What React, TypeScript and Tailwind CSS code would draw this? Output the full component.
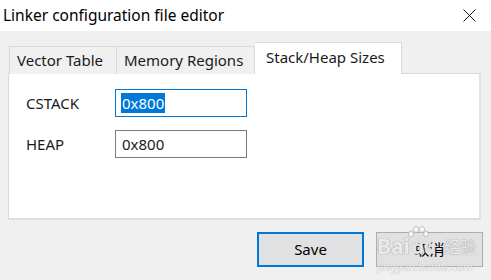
import React from "react";

const font = { fontFamily: '"Noto Sans", "Noto Sans CJK SC", sans-serif' };

export default function App() {
  return (
    <div className="w-[491px] h-[280px] bg-[#f0f0f0] text-[#1a1a1a] overflow-hidden relative" style={font}>
      {/* Title bar */}
      <div className="h-[31px] bg-white flex items-center justify-between pl-[3px] pr-[15px]">
        <span className="text-[15.5px] leading-none text-black">Linker configuration file editor</span>
        <svg width="13" height="13" viewBox="0 0 13 13" className="block">
          <path d="M0.5 0.5 L12.5 12.5 M12.5 0.5 L0.5 12.5" stroke="#111" strokeWidth="1" fill="none" />
        </svg>
      </div>

      {/* Tabs */}
      <div className="pl-[8px] pt-[11px]">
        <div className="flex items-end pl-[1px] relative z-10 -mb-px">
          <div className="h-[28px] px-[7px] flex items-center border border-b-0 border-[#d9d9d9] bg-[#f0f0f0] text-[15px] w-[108px]">
            Vector Table
          </div>
          <div className="h-[28px] px-[7px] flex items-center border border-b-0 border-l-0 border-[#d9d9d9] bg-[#f0f0f0] text-[15px] w-[138px]">
            Memory Regions
          </div>
          <div className="h-[32px] pl-[11px] flex items-center border border-b-0 border-l-0 border-[#d9d9d9] bg-white text-[15px] w-[147px] pb-[2px]">
            Stack/Heap Sizes
          </div>
        </div>

        {/* Panel */}
        <div className="w-[473px] h-[147px] bg-white border border-[#d9d9d9] border-r-2 border-b-2 border-r-[#e3e3e3] border-b-[#dedede] pl-[17px] pt-[15px] flex flex-col gap-[13px]">
          <div className="flex items-center">
            <span className="w-[89px] text-[15px]">CSTACK</span>
            <div className="w-[132px] h-[28px] border border-[#0078d7] flex items-center pl-[5px]">
              <span className="bg-[#0078d7] text-white text-[15px] leading-[20px] px-[1px]">0x800</span>
            </div>
          </div>
          <div className="flex items-center">
            <span className="w-[89px] text-[15px]">HEAP</span>
            <div className="w-[132px] h-[28px] border border-[#7a7a7a] flex items-center pl-[6px]">
              <span className="text-[15px] leading-[20px]">0x800</span>
            </div>
          </div>
        </div>
      </div>

      {/* Buttons */}
      <div className="flex justify-end gap-[12px] pr-[8px] mt-[12px]">
        <button className="w-[107px] h-[35px] bg-[#e1e1e1] border-2 border-[#0078d7] text-[15px] text-black flex items-center justify-center" style={font}>
          Save
        </button>
        <button className="w-[107px] h-[35px] bg-[#e1e1e1] border border-[#adadad] text-[15px] text-black flex items-center justify-center" style={font}>
          取消
        </button>
      </div>

      {/* Watermark */}
      <div className="absolute left-[377px] top-[226px] pointer-events-none select-none">
        <svg width="22" height="14" viewBox="0 0 22 14" className="absolute left-[30px] top-0">
          <g fill="rgba(255,255,255,0.8)" stroke="#b0b0b0" strokeWidth="0.8">
            <ellipse cx="4" cy="8" rx="2.5" ry="3" />
            <ellipse cx="9" cy="3.5" rx="2.5" ry="3" />
            <ellipse cx="15" cy="3.5" rx="2.5" ry="3" />
            <ellipse cx="19" cy="8" rx="2.3" ry="3" />
          </g>
        </svg>
        <div className="pt-[10px] flex items-end">
          <span
            className="text-[21px] leading-none font-bold text-white/80"
            style={{ textShadow: "0 0 1px #999, 0 0 1px #999" }}
          >
            Bai
          </span>
          <span
            className="text-[19px] leading-none font-bold text-white/70 ml-[2px]"
            style={{ textShadow: "0 0 1px #aaa" }}
          >
            du
          </span>
          <span
            className="text-[16px] leading-none text-white/80 ml-[8px] mb-[2px]"
            style={{ textShadow: "0 0 1px #999, 0 0 1px #999" }}
          >
            经验
          </span>
        </div>
        <div
          className="text-[10.5px] leading-none text-white/80 mt-[5px] tracking-[0.3px]"
          style={{ textShadow: "0 0 1px #999" }}
        >
          jingyan.baidu.com
        </div>
      </div>
    </div>
  );
}
